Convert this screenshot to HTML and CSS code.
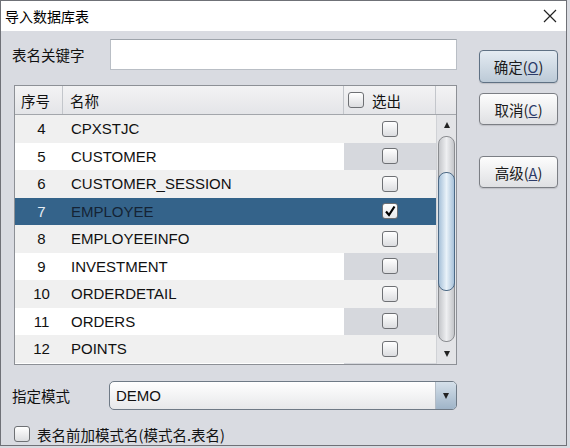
FILE: index.html
```html
<!DOCTYPE html>
<html lang="zh">
<head>
<meta charset="utf-8">
<title>导入数据库表</title>
<link rel="stylesheet" href="styles.css">
</head>
<body>
<div class="window">
  <div class="titlebar">
    <span class="title">导入数据库表</span>
    <svg class="close" width="14" height="14" viewBox="0 0 14 14"><path d="M1 1 L13 13 M13 1 L1 13" stroke="#222" stroke-width="1.2" fill="none"/></svg>
  </div>
  <div class="content">
    <div class="main">
      <div class="kwrow">
        <span class="label">表名关键字</span>
        <div class="input"></div>
      </div>
      <div class="table">
        <div class="thead">
          <div class="th c-no">序号</div>
          <div class="th c-name">名称</div>
          <div class="th c-sel"><span class="cb"></span>选出</div>
          <div class="th c-corner"></div>
        </div>
        <div class="tbody">
          <div class="rows">
            <div class="tr odd"><div class="td c-no">4</div><div class="td c-name">CPXSTJC</div><div class="td c-sel"><span class="cb"></span></div></div>
            <div class="tr even"><div class="td c-no">5</div><div class="td c-name">CUSTOMER</div><div class="td c-sel"><span class="cb"></span></div></div>
            <div class="tr odd"><div class="td c-no">6</div><div class="td c-name">CUSTOMER_SESSION</div><div class="td c-sel"><span class="cb"></span></div></div>
            <div class="tr selected"><div class="td c-no">7</div><div class="td c-name">EMPLOYEE</div><div class="td c-sel"><span class="cb checked"><svg width="14" height="14" viewBox="0 0 14 14"><path d="M3 7.5 L6 11 L11.5 2.5" stroke="#000" stroke-width="2.2" fill="none"/></svg></span></div></div>
            <div class="tr odd"><div class="td c-no">8</div><div class="td c-name">EMPLOYEEINFO</div><div class="td c-sel"><span class="cb"></span></div></div>
            <div class="tr even"><div class="td c-no">9</div><div class="td c-name">INVESTMENT</div><div class="td c-sel"><span class="cb"></span></div></div>
            <div class="tr odd"><div class="td c-no">10</div><div class="td c-name">ORDERDETAIL</div><div class="td c-sel"><span class="cb"></span></div></div>
            <div class="tr even"><div class="td c-no">11</div><div class="td c-name">ORDERS</div><div class="td c-sel"><span class="cb"></span></div></div>
            <div class="tr odd"><div class="td c-no">12</div><div class="td c-name">POINTS</div><div class="td c-sel"><span class="cb"></span></div></div>
            <div class="tr even"><div class="td c-no"></div><div class="td c-name"></div><div class="td c-sel"></div></div>
          </div>
          <div class="scrollbar">
            <div class="sb-btn"><span class="tri-up"></span></div>
            <div class="track"><div class="thumb"></div></div>
            <div class="sb-btn"><span class="tri-down"></span></div>
          </div>
        </div>
      </div>
      <div class="schemarow">
        <span class="label2">指定模式</span>
        <div class="combo">
          <span class="combo-text">DEMO</span>
          <span class="combo-btn"><span class="tri-down"></span></span>
        </div>
      </div>
      <div class="cbrow">
        <span class="cb"></span>
        <span class="cblabel">表名前加模式名(模式名.表名)</span>
      </div>
    </div>
    <div class="buttons">
      <div class="btn default">确定(<u>O</u>)</div>
      <div class="btn b2">取消(<u>C</u>)</div>
      <div class="btn b3">高级(<u>A</u>)</div>
    </div>
  </div>
</div>
</body>
</html>
```

FILE: styles.css
```css
html, body {
  margin: 0;
  padding: 0;
  background: #d9dbe1;
}
body {
  font-family: "Liberation Sans", "Noto Sans CJK SC", sans-serif;
  font-size: 15px;
  color: #111;
}
.window {
  width: 567px;
  height: 446px;
  box-sizing: border-box;
  border: 1px solid #6f7177;
  background: #d9dbe1;
  display: flex;
  flex-direction: column;
}
.titlebar {
  height: 30px;
  background: #fff;
  display: flex;
  align-items: center;
  justify-content: space-between;
  padding: 0 9px 0 4px;
  flex-shrink: 0;
}
.title {
  font-family: "Noto Sans CJK SC", sans-serif;
  font-size: 14px;
  color: #000;
}
.content {
  display: flex;
  padding: 8px 0 0 11px;
}
.main {
  width: 445px;
  display: flex;
  flex-direction: column;
}
.kwrow {
  display: flex;
  align-items: center;
  height: 31px;
}
.label {
  width: 98px;
  font-family: "Noto Sans CJK SC", sans-serif;
  font-size: 14.5px;
}
.input {
  flex: 1;
  height: 31px;
  box-sizing: border-box;
  background: #fff;
  border: 1px solid #b9bec5;
  border-top-color: #9ea4ab;
}
.table {
  margin: 15px 0 0 2px;
  height: 280px;
  box-sizing: border-box;
  border: 1px solid #8d9096;
  background: #fff;
  display: flex;
  flex-direction: column;
  overflow: hidden;
}
.thead {
  display: flex;
  height: 29px;
  box-sizing: border-box;
  border-bottom: 1px solid #a3a6ab;
  background: linear-gradient(#f3f3f4, #e4e5e8);
  flex-shrink: 0;
}
.th {
  display: flex;
  align-items: center;
  box-sizing: border-box;
  border-right: 1px solid #c3c6cb;
  font-family: "Noto Sans CJK SC", sans-serif;
  font-size: 14.5px;
  padding-left: 6px;
}
.c-no { width: 48px; }
.c-name { width: 281px; }
.c-sel { width: 92px; }
.c-corner { width: 20px; border-right: none; }
.th.c-name { padding-left: 7px; }
.th.c-sel { padding-left: 4px; gap: 8px; }
.tbody {
  flex: 1;
  display: flex;
  overflow: hidden;
}
.rows {
  width: 421px;
  overflow: hidden;
}
.tr {
  display: flex;
  height: 27.5px;
  align-items: stretch;
}
.td {
  display: flex;
  align-items: center;
  box-sizing: border-box;
}
.td.c-no {
  justify-content: center;
  padding-left: 5px;
}
.td.c-name { padding-left: 8px; }
.td.c-sel { justify-content: center; }
.tr.odd { background: #f0f0f0; }
.tr.even { background: #fff; }
.tr.even .c-sel { background: #d6d8dd; }
.tr.selected { background: #34638a; }
.tr.selected .c-no { color: #e6edf4; }
.tr.selected .c-name { color: #142335; }
.cb {
  display: inline-flex;
  align-items: center;
  justify-content: center;
  width: 16px;
  height: 16px;
  box-sizing: border-box;
  border: 1px solid #6e7074;
  border-radius: 3px;
  background: linear-gradient(#ffffff, #dcdde0);
  flex-shrink: 0;
}
.cb.checked {
  background: linear-gradient(#ffffff, #e8e9ec);
}
.scrollbar {
  width: 20px;
  background: #e3e4e7;
  display: flex;
  flex-direction: column;
  border-left: 1px solid #d0d2d6;
  box-sizing: border-box;
}
.sb-btn {
  height: 20px;
  display: flex;
  align-items: center;
  justify-content: center;
  flex-shrink: 0;
}
.tri-up {
  width: 0;
  height: 0;
  border-left: 3.5px solid transparent;
  border-right: 3.5px solid transparent;
  border-bottom: 6px solid #222;
}
.tri-down {
  width: 0;
  height: 0;
  border-left: 3.5px solid transparent;
  border-right: 3.5px solid transparent;
  border-top: 6px solid #222;
}
.track {
  flex: 1;
  margin: 1px 1px 2px 1px;
  border: 1px solid #8a8c90;
  border-radius: 8px;
  background: linear-gradient(90deg, #c4c6ca, #eeeff1 50%, #c4c6ca);
}
.thumb {
  margin: 35px -1px 0 -1px;
  height: 119px;
  box-sizing: border-box;
  border: 1px solid #4d6a86;
  border-radius: 8px;
  background: linear-gradient(90deg, #a7c1d9, #e9f2f9 50%, #a7c1d9);
}
.schemarow {
  display: flex;
  align-items: center;
  margin-top: 16px;
  height: 29px;
}
.label2 {
  width: 97px;
  font-family: "Noto Sans CJK SC", sans-serif;
  font-size: 14.5px;
}
.combo {
  flex: 1;
  height: 29px;
  box-sizing: border-box;
  border: 1px solid #6f7a86;
  border-radius: 5px;
  background: linear-gradient(#ffffff, #e7e8ea);
  display: flex;
  align-items: stretch;
  overflow: hidden;
}
.combo-text {
  flex: 1;
  display: flex;
  align-items: center;
  padding-left: 6px;
}
.combo-btn {
  width: 20px;
  border-left: 1px solid #b3bcc6;
  background: linear-gradient(#d5e0ea, #9fb4c8);
  display: flex;
  align-items: center;
  justify-content: center;
}
.cbrow {
  display: flex;
  align-items: center;
  margin-top: 16px;
  padding-left: 2px;
  height: 16px;
  gap: 7px;
}
.cblabel {
  font-family: "Noto Sans CJK SC", sans-serif;
  font-size: 14.5px;
}
.buttons {
  margin-left: 22px;
  padding-top: 11px;
  width: 79px;
  display: flex;
  flex-direction: column;
}
.btn {
  height: 32px;
  box-sizing: border-box;
  border: 1px solid #7b7e84;
  border-radius: 4px;
  background: linear-gradient(#fdfdfd, #dfe0e3);
  display: flex;
  align-items: center;
  justify-content: center;
  font-family: "Noto Sans CJK SC", sans-serif;
  font-size: 14.5px;
  color: #1a1a1a;
  box-shadow: 0 1px 1px rgba(0,0,0,0.12);
}
.btn u { color: #2b3b6a; }
.btn.default {
  height: 33px;
  border-color: #5f7184;
  background: linear-gradient(#e4ebf2, #bccad7);
}
.b2 { margin-top: 10px; }
.b3 { margin-top: 31px; }
```
